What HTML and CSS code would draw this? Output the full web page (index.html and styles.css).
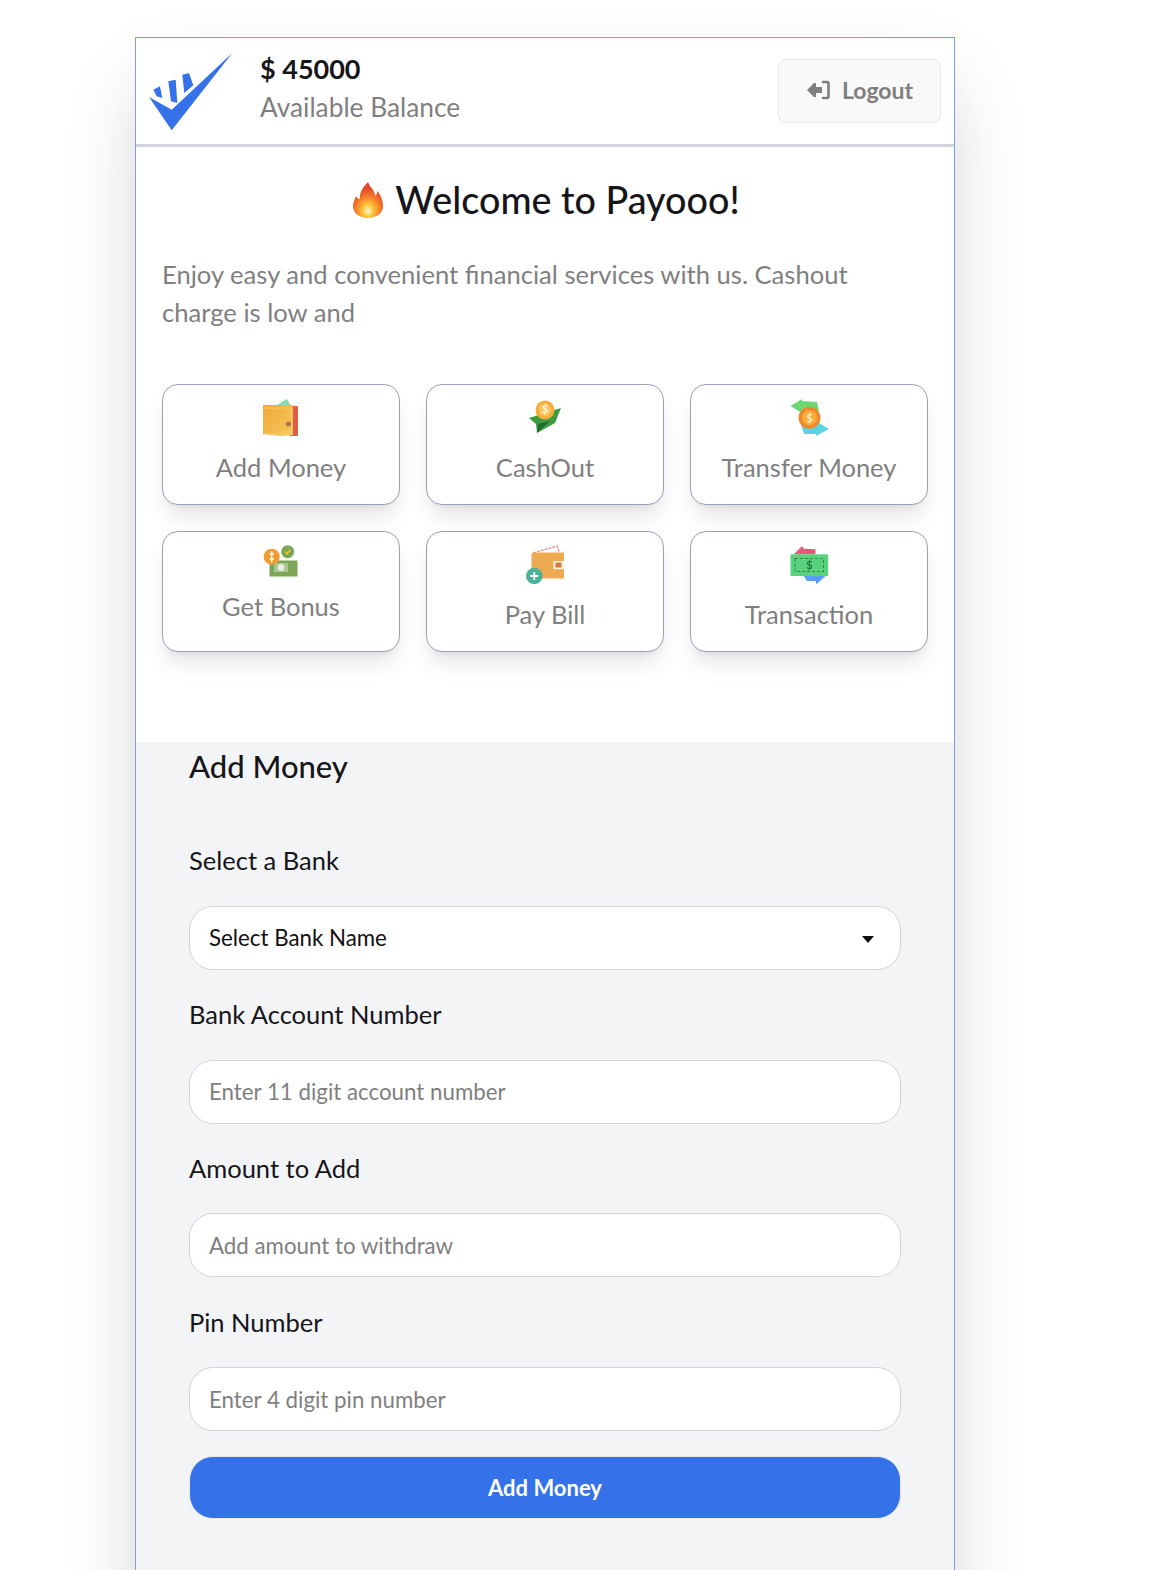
FILE: index.html
```html
<!DOCTYPE html>
<html lang="en">
<head>
<meta charset="UTF-8">
<title>Payooo</title>
<link rel="stylesheet" href="styles.css">
</head>
<body>
<div class="app">
    <header class="topbar">
        <svg class="logo" viewBox="0 0 88 83" aria-label="Payooo logo">
            <path fill="#3572ea" d="M2 47 L24.7 59.7 L85.3 3 L24.7 80.3 Z"/>
            <path fill="#3572ea" d="M6.3 39.7 L13 36.3 L15.3 48 L9.7 46.3 Z M21.3 31.3 L28.7 29.7 L30.3 53 L24 51.3 Z M35.3 24.7 L42 23 L46.3 35.3 L37.3 43 Z"/>
        </svg>
        <div class="balance">
            <div class="balance-amount">$ 45000</div>
            <div class="balance-label">Available Balance</div>
        </div>
        <button class="logout-btn">
            <svg class="logout-icon" viewBox="0 0 24 20">
                <path fill="#7f7f7f" d="M1 10 L8 3 H10 V7 H16 V13 H10 V17 H8 Z"/>
                <path fill="none" stroke="#7f7f7f" stroke-width="2.6" stroke-linecap="round" d="M17 2 H21 Q22.5 2 22.5 4 V16 Q22.5 18 21 18 H17"/>
            </svg>
            Logout
        </button>
    </header>

    <section class="intro">
        <h1 class="welcome">
            <svg class="flame" viewBox="0 0 32 38">
                <defs>
                    <radialGradient id="flameFill" cx="50%" cy="80%" r="62%">
                        <stop offset="0" stop-color="#fff8d2"/>
                        <stop offset="0.28" stop-color="#ffc73a"/>
                        <stop offset="0.62" stop-color="#f8822a"/>
                        <stop offset="1" stop-color="#e2482a"/>
                    </radialGradient>
                </defs>
                <path fill="url(#flameFill)" d="M16 1 C18 7 23 9 23 15 C25 14 25 12 25 10 C29 14 31 20 31 25 C31 32 25 37 16 37 C7 37 1 32 1 25 C1 21 3 18 4 15 C5 17 6 18 8 18 C7 12 11 6 16 1 Z"/>
            </svg>
            Welcome to Payooo!
        </h1>
        <p class="intro-text">Enjoy easy and convenient financial services with us. Cashout charge is low and</p>

        <div class="actions">
            <div class="action-card">
                <svg class="action-icon" viewBox="0 0 42 42">
                    <defs>
                        <linearGradient id="walletFill" x1="0" y1="0" x2="1" y2="1">
                            <stop offset="0" stop-color="#f0a93a"/>
                            <stop offset="1" stop-color="#f6c65a"/>
                        </linearGradient>
                    </defs>
                    <path fill="#7fdcae" d="M12 11 L27 2 L32 11 Z"/>
                    <path fill="#dc5f48" d="M30 9 H37 Q38 9 38 10 V38 Q38 39 37 39 H30 Z"/>
                    <path fill="url(#walletFill)" d="M3 8 H33 V38 L20 39 L3 37 Z"/>
                    <path fill="none" stroke="#f9dc7e" stroke-width="1" stroke-dasharray="2 1.5" d="M4 11 H31 V37 H4"/>
                    <circle cx="28.5" cy="27" r="2.6" fill="#b8714a"/>
                </svg>
                <span>Add Money</span>
            </div>
            <div class="action-card">
                <svg class="action-icon" viewBox="0 0 42 42">
                    <path fill="#3c9a3f" d="M5 21 L37 11 L31 26 L13 36 L12 27 Z"/>
                    <path fill="#1f6b2a" d="M14 27 L26 24 L13 36 Z"/>
                    <circle cx="21" cy="13" r="9.5" fill="#f4ae3d"/>
                    <circle cx="21" cy="13" r="6" fill="#f8c868"/>
                    <text class="coin-mark" x="21" y="16">$</text>
                </svg>
                <span>CashOut</span>
            </div>
            <div class="action-card">
                <svg class="action-icon" viewBox="0 0 42 42">
                    <path fill="#6bd873" d="M2.5 9 L14 2 V4 L29 5 L31 14 L12 16 V15 Z"/>
                    <path fill="#5ad3e2" d="M12.5 26 L31 26 L41 32 L28 39 V37 L16 37 Z"/>
                    <circle cx="21.5" cy="20.7" r="11" fill="#ef8a2c"/>
                    <circle cx="21.5" cy="20.7" r="7.5" fill="#f7ae3d"/>
                    <text class="coin-mark" x="21.5" y="24.5">$</text>
                </svg>
                <span>Transfer Money</span>
            </div>
            <div class="action-card">
                <svg class="action-icon action-icon-short" viewBox="0 0 42 34">
                    <rect x="9.5" y="16.5" width="28" height="16" fill="#7ba655"/>
                    <rect x="14" y="19" width="14" height="9" fill="#a9c792"/>
                    <circle cx="21" cy="23.5" r="3.4" fill="#e8f0df"/>
                    <circle cx="27.7" cy="7.7" r="6.5" fill="#7ba655"/>
                    <path fill="none" stroke="#f2c230" stroke-width="1.6" d="M25 7.8 L27 9.8 L30.5 5.8"/>
                    <circle cx="11.7" cy="12.7" r="8" fill="#f49b30"/>
                    <path fill="none" stroke="#fff" stroke-width="1.4" d="M11.7 7 V18.5 M9.5 10 H14 M9.5 15 H14"/>
                </svg>
                <span>Get Bonus</span>
            </div>
            <div class="action-card">
                <svg class="action-icon" viewBox="0 0 42 42">
                    <path fill="none" stroke="#ea8a80" stroke-width="1.2" stroke-dasharray="3 1" d="M9 9 L33 2 L35.5 9"/>
                    <path fill="#edaa50" d="M9.5 8.5 H40 V34.5 H9.5 Q7.5 34.5 7.5 32 V11 Q7.5 8.5 9.5 8.5 Z"/>
                    <rect x="29.5" y="17" width="10.5" height="8.3" fill="#fff3df"/>
                    <rect x="31.5" y="18.5" width="6" height="5" fill="#cd7a3c"/>
                    <circle cx="10.3" cy="32" r="8.3" fill="#4bb39a"/>
                    <path stroke="#fff" stroke-width="1.8" d="M10.3 28 V36 M6.3 32 H14.3"/>
                </svg>
                <span>Pay Bill</span>
            </div>
            <div class="action-card">
                <svg class="action-icon" viewBox="0 0 42 42">
                    <path fill="#ee5675" d="M5.8 10.3 L14 2 L15.8 4.7 L27.5 5.3 V10.3 Z"/>
                    <path fill="#5b9cf4" d="M15.8 32 L19 37 L27.5 37 L28.5 40.3 L37.5 32 Z"/>
                    <rect x="2.5" y="10.3" width="37.7" height="21.7" fill="#58d27c"/>
                    <rect x="7" y="14.5" width="28.5" height="13" fill="none" stroke="#2f8a4c" stroke-width="1.2" stroke-dasharray="3 2"/>
                    <text class="bill-mark" x="21.5" y="25">$</text>
                </svg>
                <span>Transaction</span>
            </div>
        </div>
    </section>

    <section class="form-panel">
        <h2 class="form-title">Add Money</h2>
        <form class="money-form">
            <label class="field-label">Select a Bank</label>
            <div class="select-wrap">
                <select class="field-input field-select">
                    <option>Select Bank Name</option>
                </select>
                <span class="select-caret"></span>
            </div>
            <label class="field-label">Bank Account Number</label>
            <input class="field-input" type="text" placeholder="Enter 11 digit account number">
            <label class="field-label">Amount to Add</label>
            <input class="field-input" type="text" placeholder="Add amount to withdraw">
            <label class="field-label">Pin Number</label>
            <input class="field-input" type="text" placeholder="Enter 4 digit pin number">
            <button class="submit-btn" type="button">Add Money</button>
        </form>
    </section>
</div>
</body>
</html>
```

FILE: styles.css
```css
* {
    box-sizing: border-box;
}
html, body {
    height: 1570px;
    overflow: hidden;
}
body {
    margin: 0;
    padding: 37px 0 0 135px;
    background: #fff;
    font-family: "Lato", "Liberation Sans", sans-serif;
    color: #16161a;
}
.app {
    width: 820px;
    height: 1600px;
    border: 1px solid #7f9fe0;
    background: #fff;
    box-shadow: 0 37px 75px -18px rgba(0,0,0,0.25);
}
.topbar {
    display: flex;
    align-items: center;
    height: 109px;
    padding: 0 13px 0 11px;
    border-bottom: 3px solid #d1d5db;
}
.logo {
    width: 88px;
    height: 83px;
    margin-right: 25px;
}
.balance {
    flex: 1;
    padding-bottom: 6px;
}
.balance-amount {
    font-size: 27px;
    line-height: 38px;
    font-weight: 700;
}
.balance-label {
    font-size: 26.3px;
    line-height: 38px;
    color: #7f7f7f;
}
.logout-btn {
    display: flex;
    align-items: center;
    justify-content: center;
    gap: 12px;
    width: 163px;
    height: 64px;
    padding-bottom: 3px;
    background: #f9f9f9;
    border: 1px solid #e8e8e8;
    border-radius: 8px;
    font-family: inherit;
    font-size: 23px;
    font-weight: 700;
    color: #7f7f7f;
}
.logout-icon {
    width: 24px;
    height: 20px;
}
.intro {
    height: 595px;
    padding: 0 26px;
}
.welcome {
    display: flex;
    align-items: center;
    justify-content: center;
    gap: 11px;
    margin: 0;
    padding: 33px 0 0 2px;
    font-size: 37.7px;
    line-height: 40px;
    font-weight: 500;
}
.flame {
    width: 32px;
    height: 38px;
}
.intro-text {
    margin: 35px 0 0;
    font-size: 25.6px;
    line-height: 38px;
    color: #7f7f7f;
}
.actions {
    display: grid;
    grid-template-columns: repeat(3, 1fr);
    grid-auto-rows: 121px;
    gap: 26px;
    margin-top: 53px;
}
.action-card {
    display: flex;
    flex-direction: column;
    align-items: center;
    padding-top: 12px;
    border: 1px solid #9aa1b5;
    border-radius: 16px;
    background: #fff;
    box-shadow: 0 15px 22px -4px rgba(0,0,0,0.1), 0 6px 9px -6px rgba(0,0,0,0.1);
    font-size: 25.5px;
    line-height: 36px;
    color: #7f7f7f;
}
.action-icon {
    width: 42px;
    height: 42px;
    margin-bottom: 10px;
    filter: blur(0.4px);
}
.action-icon-short {
    height: 34px;
}
.coin-mark, .bill-mark {
    font-size: 11px;
    font-weight: 700;
    text-anchor: middle;
    fill: #fff3cf;
}
.bill-mark {
    fill: #1f7a3a;
}
.form-panel {
    height: 900px;
    padding: 0 53px;
    background: #f3f4f6;
}
.form-title {
    margin: 0;
    font-size: 31px;
    line-height: 48px;
    font-weight: 500;
}
.money-form {
    display: flex;
    flex-direction: column;
    padding-top: 26px;
}
.field-label {
    display: flex;
    align-items: center;
    height: 89.75px;
    padding-bottom: 1px;
    font-size: 25.5px;
}
.select-wrap {
    position: relative;
}
.field-input {
    display: block;
    width: 100%;
    height: 64px;
    padding: 0 19px;
    border: 1px solid #d1d5db;
    border-radius: 24px;
    background: #fff;
    font-family: inherit;
    font-size: 22.3px;
    color: #111;
}
.field-input::placeholder {
    color: #7f7f7f;
}
.field-select {
    appearance: none;
}
.select-caret {
    position: absolute;
    right: 27px;
    top: 30px;
    border-left: 6.5px solid transparent;
    border-right: 6.5px solid transparent;
    border-top: 7px solid #111;
}
.submit-btn {
    height: 63px;
    margin-top: 25px;
    border: 1px solid #e5e7eb;
    border-radius: 24px;
    background: #3572ea;
    color: #fff;
    font-family: inherit;
    font-size: 22px;
    font-weight: 700;
}
```
